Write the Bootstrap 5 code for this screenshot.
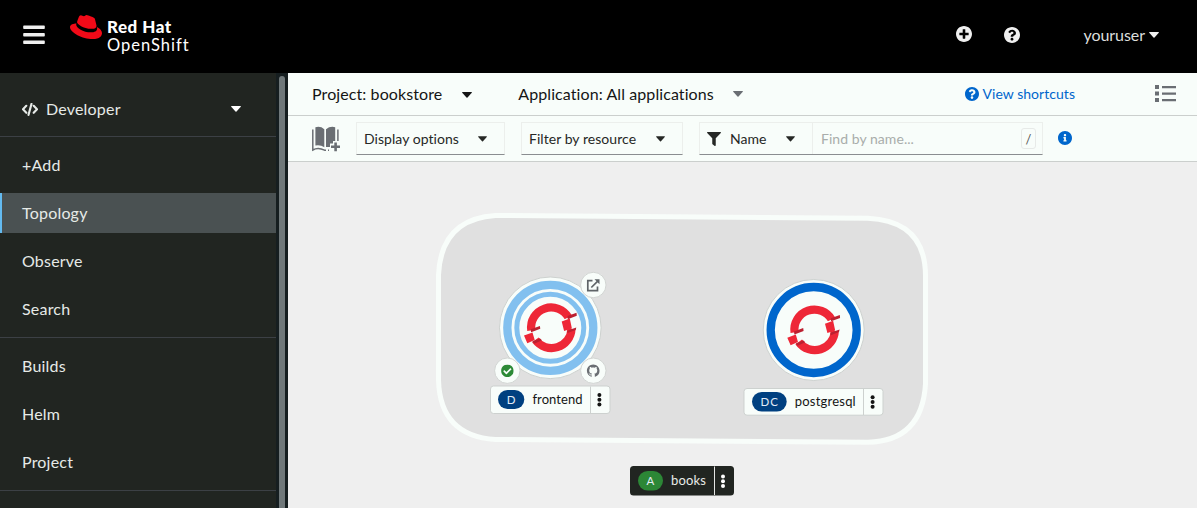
<!DOCTYPE html>
<html lang="en">
<head>
<meta charset="utf-8">
<title>Topology - Red Hat OpenShift</title>
<link href="https://cdn.jsdelivr.net/npm/bootstrap@5.3.0/dist/css/bootstrap.min.css" rel="stylesheet">
<style>
:root { --paper: #f8fdfa; --ink: #151515; --link: #0066cc; }
body { font-family: Lato, "Open Sans", sans-serif; font-size: 16px; line-height: 24px; height: 508px; overflow: hidden; color: var(--ink); background: #efefef; }
svg { display: block; flex: none; fill: currentColor; }
.masthead { height: 73px; background: #000; color: #f0f0f0; padding: 0 38px 3px 23px; }
.brand-logo { margin: 2px 0 0 25px; }
.brand-logo svg { color: #f20a18; margin-top: -7px; }
.brand-words { font-size: 16.5px; line-height: 18.5px; color: #fff; margin-left: 5px; }
.brand-words b { font-weight: 900; display: block; font-size: 17px; letter-spacing: .5px; }
.brand-words span { letter-spacing: 1px; }
.user-name { margin-left: 55px; color: #dcdedc; letter-spacing: -.05px; }
.side { width: 276px; background: #212521; color: #e6eae7; flex: none; letter-spacing: .2px; }
.side .perspective { height: 64px; padding: 9px 35px 0 22px; border-bottom: 1px solid #3c4045; }
.side .nav-link { height: 40px; margin-bottom: 8px; padding: 8px 0 0 22px; color: inherit; line-height: 24px; }
.side .nav-link.active { background: #4a5152; border-left: 2px solid #63baf0; padding-left: 20px; }
.side .section { padding-top: 8px; border-bottom: 1px solid #3c4045; }
.scroll-track { width: 12px; background: #161e20; padding: 3px 3px 0; flex: none; }
.scroll-thumb { width: 6px; background: #70787a; border-radius: 3px 3px 0 0; height: 100%; }
.context-bar { height: 43px; background: var(--paper); border-bottom: 1px solid #cbcfcd; padding: 0 21px 1px 24px; letter-spacing: .09px; }
.tool-bar { height: 46px; background: var(--paper); border-bottom: 1px solid #cbcfcd; padding: 0 0 0 24px; }
.pick { height: 33px; border: 1px solid #ecefec; border-bottom-color: #8a8d90; font-size: 14px; padding: 1px 17px 0 7px; color: #262826; letter-spacing: .05px; }
.name-pick { width: 112px; padding-right: 17px; border: 0; height: 31px; }
.find { border-left: 1px solid #ecefec; color: #a9adab; padding: 0 6px 0 8px; width: 230px; font-size: 14px; }
.slash { width: 15px; height: 21px; border: 1px solid #e7eae8; border-radius: 3px; font-size: 13px; line-height: 20px; color: #555; text-align: center; }
.shortcuts { color: var(--link); font-size: 14px; letter-spacing: .04px; margin-right: 80px; }
.node-text { font-size: 13px; fill: var(--ink); }
.kind { font-size: 11.5px; fill: #e3ecf7; }
</style>
</head>
<body class="d-flex flex-column">
<svg width="0" height="0" class="position-absolute">
  <defs>
    <path id="caret" d="M0 .6Q0 0 .7 0H9.3Q10 0 10 .6L5.5 5.6Q5 6 4.5 5.6Z"/>
    <path id="question" d="M504 256c0 136.997-111.043 248-248 248S8 392.997 8 256C8 119.083 119.043 8 256 8s248 111.083 248 248zM262.655 90c-54.497 0-89.255 22.957-116.549 63.758-3.536 5.286-2.353 12.415 2.715 16.258l34.699 26.31c5.205 3.947 12.621 3.008 16.665-2.122 17.864-22.658 30.113-35.797 57.303-35.797 20.429 0 45.698 13.148 45.698 32.958 0 14.976-12.363 22.667-32.534 33.976C247.128 238.528 216 254.941 216 296v4c0 6.627 5.373 12 12 12h56c6.627 0 12-5.373 12-12v-1.333c0-28.462 83.186-29.647 83.186-106.667 0-58.002-60.165-102-116.531-102zM256 338c-25.365 0-46 20.635-46 46 0 25.364 20.635 46 46 46s46-20.636 46-46c0-25.365-20.635-46-46-46z"/>
    <g id="openshift">
      <path d="M-20 2.5A20 20 0 0 1 17.2-10.2" fill="none" stroke="#ee2737" stroke-width="8.2"/>
      <path d="M-15.9 12.1A20 20 0 0 0 20.2 1" fill="none" stroke="#ee2737" stroke-width="8.2"/>
      <path fill="#f8fdfa" d="M-28 7L-10.5 .3L-11.8 4.5L-18.6 4.7ZM9.6-7.3L27-13.8L25.6-9.5L18.6-8.6L10.6-6Z"/>
      <path fill="#ee2737" d="M-27.3 7.8L-18.8 4.7L-16.6 12.2L-24 15.4ZM10.4-6.2L18.5-9.2L20.6.6L12.8 3.2Z"/>
      <path fill="#bc2030" d="M-20.6 1.5L-11.4-1.9L-11 1L-20.2 4.5ZM-19 13.5L-11.3 10.7L-9.3 12.4L-17 15.9ZM16.2-11.7L25.2-15L25.5-12L16.5-8.6ZM15.9 2.9L25-.3L24.4 2.2L16.2 5.3Z"/>
    </g>
    <g id="kebab"><circle cy="-4.7" r="2"/><circle r="2"/><circle cy="4.7" r="2"/></g>
  </defs>
</svg>

<header class="masthead d-flex align-items-center flex-shrink-0">
  <svg width="22" height="20" viewBox="0 0 22 20"><path d="M1 .5h20q.8 0 .8.8v1.900q0 .8-.8.8H1q-.8 0-.8-.8V1.300q0-.8.8-.8zM1 8h20q.8 0 .8.8v1.900q0 .8-.8.8H1q-.8 0-.8-.8V8.800Q.2 8 1 8zM1 15.500h20q.8 0 .8.8v1.900q0 .8-.8.8H1q-.8 0-.8-.8v-1.900q0-.8.8-.8z"/></svg>
  <div class="brand-logo d-flex align-items-start">
    <svg width="32" height="32" viewBox="0 0 24 24"><path d="M16.009 13.386c1.577 0 3.86-.326 3.86-2.202a1.765 1.765 0 0 0-.04-.431l-.94-4.08c-.216-.898-.406-1.305-1.982-2.093-1.223-.625-3.888-1.658-4.676-1.658-.733 0-.947.946-1.822.946-.842 0-1.467-.706-2.255-.706-.757 0-1.25.515-1.63 1.576 0 0-1.06 2.99-1.197 3.424a.81.81 0 0 0-.028.245c0 1.162 4.577 4.974 10.71 4.974m4.101-1.435c.218 1.032.218 1.14.218 1.277 0 1.765-1.984 2.745-4.593 2.745-5.895.004-11.06-3.451-11.06-5.734a2.326 2.326 0 0 1 .19-.925C2.746 9.415 0 9.794 0 12.217c0 3.969 9.405 8.861 16.851 8.861 5.71 0 7.149-2.582 7.149-4.62 0-1.605-1.387-3.425-3.887-4.512"/></svg>
    <div class="brand-words"><b>Red Hat</b><span>OpenShift</span></div>
  </div>
  <div class="d-flex align-items-center ms-auto">
    <svg width="16" height="16" viewBox="8 8 496 496" style="margin-bottom:2px"><path d="M256 8C119 8 8 119 8 256s111 248 248 248 248-111 248-248S393 8 256 8zm144 276c0 6.600-5.400 12-12 12h-92v92c0 6.600-5.400 12-12 12h-56c-6.600 0-12-5.400-12-12v-92h-92c-6.600 0-12-5.400-12-12v-56c0-6.600 5.400-12 12-12h92v-92c0-6.600 5.400-12 12-12h56c6.600 0 12 5.400 12 12v92h92c6.600 0 12 5.400 12 12v56z"/></svg>
    <svg width="16" height="16" viewBox="8 8 496 496" style="margin-left:32px"><use href="#question"/></svg>
    <span class="user-name ps-2">youruser</span>
    <svg width="10" height="6" class="ms-1"><use href="#caret"/></svg>
  </div>
</header>

<div class="d-flex flex-grow-1" style="min-height:0">
  <nav class="side overflow-hidden">
    <div class="perspective d-flex align-items-center">
      <svg width="16" height="13" viewBox="0 0 16 13"><path d="M4.300 2.800L1 6.300L4.300 9.800M11.700 2.800L15 6.300L11.700 9.800M9.500 .9L6.500 11.900" fill="none" stroke="currentColor" stroke-width="2.1" stroke-linecap="round" stroke-linejoin="round"/></svg>
      <span class="ms-2">Developer</span>
      <svg width="10" height="6" class="ms-auto" style="color:#fff"><use href="#caret"/></svg>
    </div>
    <div class="section">
      <a class="nav-link" href="#">+Add</a>
      <a class="nav-link active" href="#">Topology</a>
      <a class="nav-link" href="#">Observe</a>
      <a class="nav-link" href="#">Search</a>
    </div>
    <div class="section">
      <a class="nav-link" href="#">Builds</a>
      <a class="nav-link" href="#">Helm</a>
      <a class="nav-link" href="#">Project</a>
    </div>
  </nav>
  <div class="scroll-track"><div class="scroll-thumb"></div></div>

  <main class="flex-grow-1 d-flex flex-column">
    <div class="context-bar d-flex align-items-center">
      <span>Project: bookstore</span>
      <svg width="10" height="6" style="margin-left:20px;margin-top:2px"><use href="#caret"/></svg>
      <span style="margin-left:46px">Application: All applications</span>
      <svg width="10" height="6" style="margin-left:19px;color:#6a6e73"><use href="#caret"/></svg>
      <a class="shortcuts d-flex align-items-center text-decoration-none ms-auto" href="#">
        <svg width="14" height="14" viewBox="8 8 496 496" class="me-1"><use href="#question"/></svg>View shortcuts
      </a>
      <svg width="21" height="17" viewBox="0 0 21 17" style="color:#6a6e73"><path d="M0 0h4v4H0zM0 6.500h4v4H0zM0 13h4v4H0zM7 1h14v2.200H7zM7 7.500h14v2.200H7zM7 14h14v2.200H7z"/></svg>
    </div>
    <div class="tool-bar d-flex align-items-center">
      <svg width="28" height="26" viewBox="0 0 28 26" style="color:#6a6e73">
        <path d="M3.400 1.200Q8.500-.3 12.300 3.200V21.300Q8.500 18.500 3.400 19.500ZM14 3.200Q18 0 23.200 1.200V15H21V17.500H18V21H14Z"/>
        <path d="M.8 3.500V24Q6 20.800 12.500 24.200H14M25.900 3.500V15M16 24.200H17" fill="none" stroke="currentColor" stroke-width="1.500"/>
        <path d="M22.300 16.500h2.600v3H28v2.600h-3.100v3.100h-2.600v-3.100H19v-2.600h3.300z"/>
      </svg>
      <div class="pick d-flex align-items-center justify-content-between" style="width:149px;margin-left:16px"><span>Display options</span><svg width="9" height="6" viewBox="0 0 10 6"><use href="#caret"/></svg></div>
      <div class="pick d-flex align-items-center justify-content-between ms-3" style="width:162px"><span>Filter by resource</span><svg width="9" height="6" viewBox="0 0 10 6"><use href="#caret"/></svg></div>
      <div class="pick d-flex p-0 ms-3" style="width:344px">
        <div class="name-pick pick d-flex align-items-center">
          <svg width="14" height="14" viewBox="0 0 512 512"><path d="M487.976 0H24.028C2.710 0-8.047 25.866 7.058 40.971L192 225.941V432c0 7.831 3.821 15.170 10.237 19.662l80 55.980C298.020 518.690 320 507.493 320 487.980V225.941l184.947-184.970C520.021 25.896 509.338 0 487.976 0z"/></svg>
          <span style="margin-left:9px">Name</span>
          <svg width="9" height="6" viewBox="0 0 10 6" class="ms-auto"><use href="#caret"/></svg>
        </div>
        <div class="find d-flex align-items-center justify-content-between"><span>Find by name...</span><span class="slash">/</span></div>
      </div>
      <svg width="14" height="14" viewBox="8 8 496 496" style="color:#0066cc;margin-left:15px;margin-bottom:2px"><path d="M256 8C119.043 8 8 119.083 8 256c0 136.997 111.043 248 248 248s248-111.003 248-248C504 119.083 392.957 8 256 8zm0 110c23.196 0 42 18.804 42 42s-18.804 42-42 42-42-18.804-42-42 18.804-42 42-42zm56 254c0 6.627-5.373 12-12 12h-88c-6.627 0-12-5.373-12-12v-24c0-6.627 5.373-12 12-12h12v-64h-12c-6.627 0-12-5.373-12-12v-24c0-6.627 5.373-12 12-12h64c6.627 0 12 5.373 12 12v100h12c6.627 0 12 5.373 12 12v24z"/></svg>
    </div>

    <svg width="909" height="346" viewBox="288 162 909 346">
      <path d="M495.500 215.500L868 218.300Q925.500 221 925.500 276V384Q922 441 868 442.200L495.500 439.500Q440 436 438.500 380V275Q441 219 495.500 215.500Z" fill="#e0e0e0" stroke="#f8fdfa" stroke-width="5"/>

      <g id="frontend">
        <circle cx="550.300" cy="327.800" r="50.800" fill="#f8fdfa" stroke="#cdd1cf"/>
        <circle cx="550.300" cy="327.800" r="43" fill="none" stroke="#82c0ef" stroke-width="8.300"/>
        <circle cx="550.300" cy="327.800" r="33.500" fill="none" stroke="#82c0ef" stroke-width="5"/>
        <use href="#openshift" x="551.300" y="327.800"/>
        <g fill="#f8fdfa" stroke="#d2d5d3"><circle cx="593.300" cy="285" r="12.700"/><circle cx="507.300" cy="370.700" r="12.700"/><circle cx="593.300" cy="370.700" r="12.700"/></g>
        <path d="M592.500 280.700H587.800V290.700H597.500V286.500M591.300 287.500L598 280.800" fill="none" stroke="#5f6468" stroke-width="1.700"/>
        <path d="M594.500 279.200H599.500V284.200Z" fill="#5f6468"/>
        <svg x="501.100" y="364.500" width="12.600" height="12.600" viewBox="8 8 496 496"><path fill="#2c8a36" d="M504 256c0 136.967-111.033 248-248 248S8 392.967 8 256 119.033 8 256 8s248 111.033 248 248zM227.314 387.314l184-184c6.248-6.248 6.248-16.379 0-22.627l-22.627-22.627c-6.248-6.249-16.379-6.249-22.628 0L216 308.118l-70.059-70.059c-6.248-6.248-16.379-6.248-22.628 0l-22.627 22.627c-6.248 6.248-6.248 16.379 0 22.627l104 104c6.249 6.249 16.379 6.249 22.628.001z"/></svg>
        <path transform="translate(586.900 364.500) scale(.79)" fill="#6a6e73" d="M8 0C3.580 0 0 3.580 0 8c0 3.540 2.290 6.530 5.470 7.590.4.070.55-.17.55-.38 0-.19-.01-.82-.01-1.490-2.010.37-2.530-.49-2.690-.94-.09-.23-.48-.94-.82-1.130-.28-.15-.68-.52-.01-.53.63-.01 1.080.58 1.230.82.72 1.210 1.870.87 2.330.66.07-.52.28-.87.51-1.070-1.780-.2-3.640-.89-3.640-3.950 0-.87.31-1.590.82-2.150-.08-.2-.36-1.020.08-2.120 0 0 .67-.21 2.200.82.64-.18 1.320-.27 2-.27s1.360.09 2 .27c1.530-1.040 2.200-.82 2.200-.82.44 1.100.16 1.920.08 2.120.51.56.82 1.270.82 2.150 0 3.070-1.870 3.750-3.650 3.950.29.25.54.73.54 1.480 0 1.070-.01 1.930-.01 2.200 0 .21.15.46.55.38A8.010 8.010 0 0 0 16 8c0-4.420-3.580-8-8-8"/>
        <rect x="490.500" y="386" width="119.500" height="27.500" rx="3" fill="#f8fdfa" stroke="#cdd1cf"/>
        <path d="M590.500 386.500V413" stroke="#cdd1cf"/>
        <rect x="498" y="390" width="26.300" height="19" rx="9.500" fill="#004080"/>
        <text class="kind" x="511.100" y="403.700" text-anchor="middle">D</text>
        <text class="node-text" x="532.500" y="403.700" textLength="50">frontend</text>
        <use href="#kebab" x="599.400" y="399.700"/>
      </g>

      <g id="postgresql">
        <circle cx="813.700" cy="330" r="50.500" fill="#f8fdfa" stroke="#cdd1cf"/>
        <circle cx="813.700" cy="330" r="43" fill="none" stroke="#0066cc" stroke-width="8.300"/>
        <use href="#openshift" x="814.600" y="329.900"/>
        <rect x="744" y="388.500" width="139" height="26.700" rx="3" fill="#f8fdfa" stroke="#cdd1cf"/>
        <path d="M863.500 389V415" stroke="#cdd1cf"/>
        <rect x="752" y="392" width="34.700" height="19.500" rx="9.750" fill="#004080"/>
        <text class="kind" x="760.500" y="406" textLength="17.500">DC</text>
        <text class="node-text" x="794.700" y="406" textLength="61">postgresql</text>
        <use href="#kebab" x="872.600" y="402"/>
      </g>

      <g id="books">
        <rect x="630" y="466" width="104" height="29.500" rx="3.500" fill="#212521"/>
        <path d="M714.500 466.500V495" stroke="#e4e6e4"/>
        <rect x="638" y="471" width="25" height="19.500" rx="9.750" fill="#2c8736"/>
        <text class="kind" x="650.500" y="485" text-anchor="middle">A</text>
        <text class="node-text" x="671" y="485" textLength="35" style="fill:#e8ebe8">books</text>
        <use href="#kebab" x="723" y="481.200" fill="#fff"/>
      </g>
    </svg>
  </main>
</div>
<script src="https://cdn.jsdelivr.net/npm/bootstrap@5.3.0/dist/js/bootstrap.bundle.min.js"></script>
</body>
</html>
